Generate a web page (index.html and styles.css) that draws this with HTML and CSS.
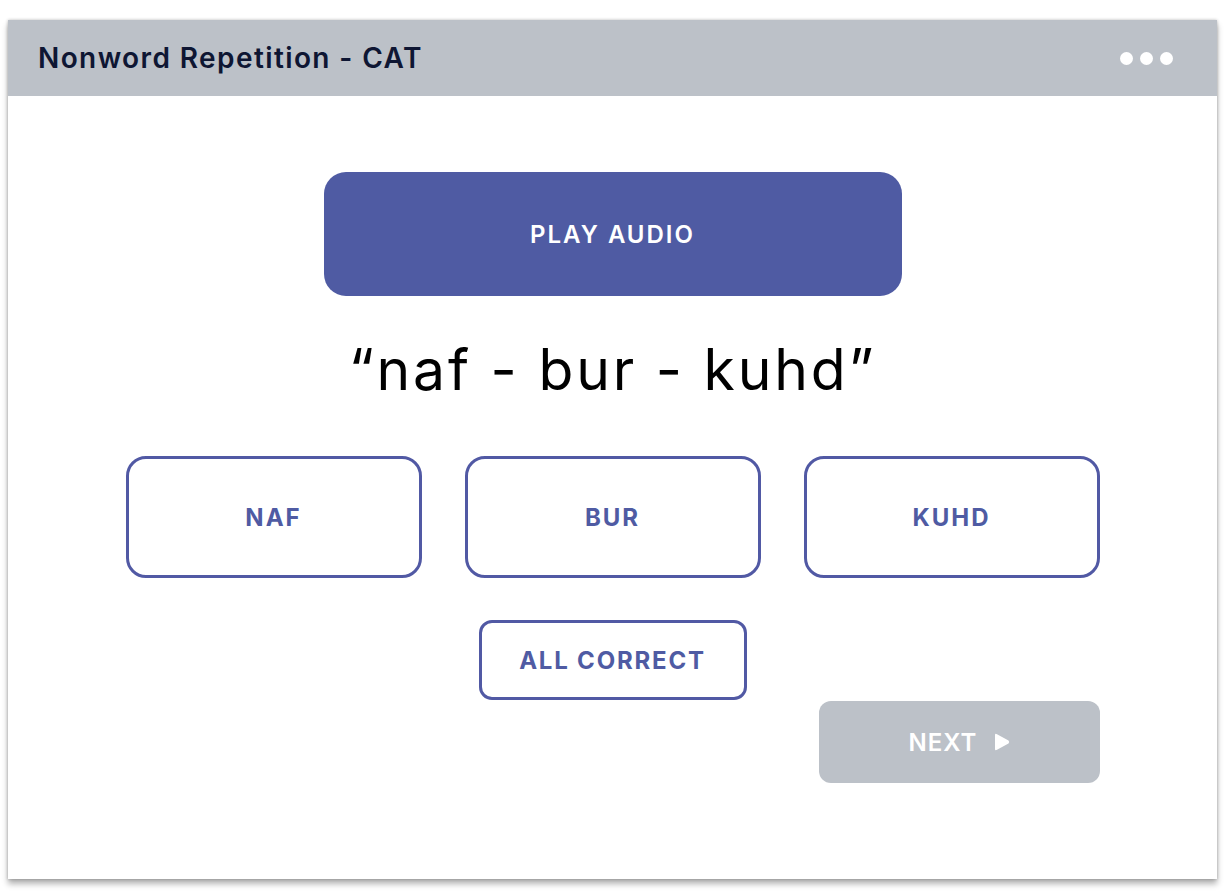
FILE: index.html
```html
<!DOCTYPE html>
<html lang="en">

<head>
    <meta charset="UTF-8">
    <meta name="viewport" content="width=device-width, initial-scale=1.0">
    <title>Nonword Repetition - CAT</title>
    <link rel="stylesheet" href="styles.css">
</head>

<body>
    <div class="window">
        <div class="titlebar">
            <h1 class="title">Nonword Repetition - CAT</h1>
            <div class="dots">
                <span></span><span></span><span></span>
            </div>
        </div>

        <div class="content">
            <button class="play">PLAY AUDIO</button>

            <p class="word">&ldquo;naf - bur - kuhd&rdquo;</p>

            <div class="parts">
                <button class="part">NAF</button>
                <button class="part">BUR</button>
                <button class="part">KUHD</button>
            </div>

            <button class="allright">ALL CORRECT</button>

            <div class="footer">
                <button class="next">NEXT
                    <svg width="16" height="20" viewBox="0 0 16 20">
                        <path d="M1 3 Q1 1 3 2.2 L14.5 8.6 Q16 10 14.5 11.4 L3 17.8 Q1 19 1 17 Z" fill="#fff"/>
                    </svg>
                </button>
            </div>
        </div>
    </div>
</body>

</html>
```

FILE: styles.css
```css
* {
    margin: 0;
    padding: 0;
    box-sizing: border-box;
}

body {
    background: #fff;
    min-height: 892px;
    padding: 20px 11px 0 8px;
    font-family: "Inter", "Liberation Sans", sans-serif;
}

/* 窗口 */
.window {
    width: 1209px;
    height: 859px;
    background: #fff;
    box-shadow: 0 5px 6px rgba(0, 0, 0, 0.3), 0 0 3px rgba(0, 0, 0, 0.25);
}

.titlebar {
    height: 76px;
    background: #bcc1c8;
    display: flex;
    align-items: center;
    justify-content: space-between;
    padding: 0 44px 0 30px;
}

.title {
    font-size: 28px;
    font-weight: 600;
    color: #0e1633;
    letter-spacing: 1.4px;
}

.dots {
    display: flex;
    gap: 7px;
}

.dots span {
    width: 13px;
    height: 13px;
    border-radius: 50%;
    background: #fff;
}

/* 内容 */
.content {
    display: flex;
    flex-direction: column;
    align-items: center;
}

button {
    font-family: inherit;
    cursor: pointer;
    border: none;
    background: none;
}

.play {
    margin-top: 76px;
    width: 578px;
    height: 124px;
    border-radius: 22px;
    background: #4f5ba3;
    color: #fff;
    font-size: 24px;
    font-weight: 600;
    letter-spacing: 2px;
}

.word {
    margin-top: 38px;
    height: 72px;
    line-height: 72px;
    font-size: 57px;
    font-weight: 400;
    color: #000;
    letter-spacing: 2.8px;
}

.parts {
    margin-top: 50px;
    display: flex;
    gap: 43px;
}

.part {
    width: 296px;
    height: 122px;
    border: 3px solid #5159a4;
    border-radius: 20px;
    color: #4f5ba3;
    font-size: 24px;
    font-weight: 700;
    letter-spacing: 2px;
}

.allright {
    margin-top: 42px;
    width: 268px;
    height: 80px;
    border: 3px solid #5159a4;
    border-radius: 13px;
    color: #4f5ba3;
    font-size: 24px;
    font-weight: 700;
    letter-spacing: 1.8px;
}

.footer {
    width: 975px;
    margin-top: 1px;
    display: flex;
    justify-content: flex-end;
}

.next {
    width: 281px;
    height: 82px;
    border-radius: 12px;
    background: #bcc1c8;
    color: #fff;
    font-size: 24px;
    font-weight: 600;
    letter-spacing: 1px;
    display: flex;
    align-items: center;
    justify-content: center;
    gap: 17px;
}
```
